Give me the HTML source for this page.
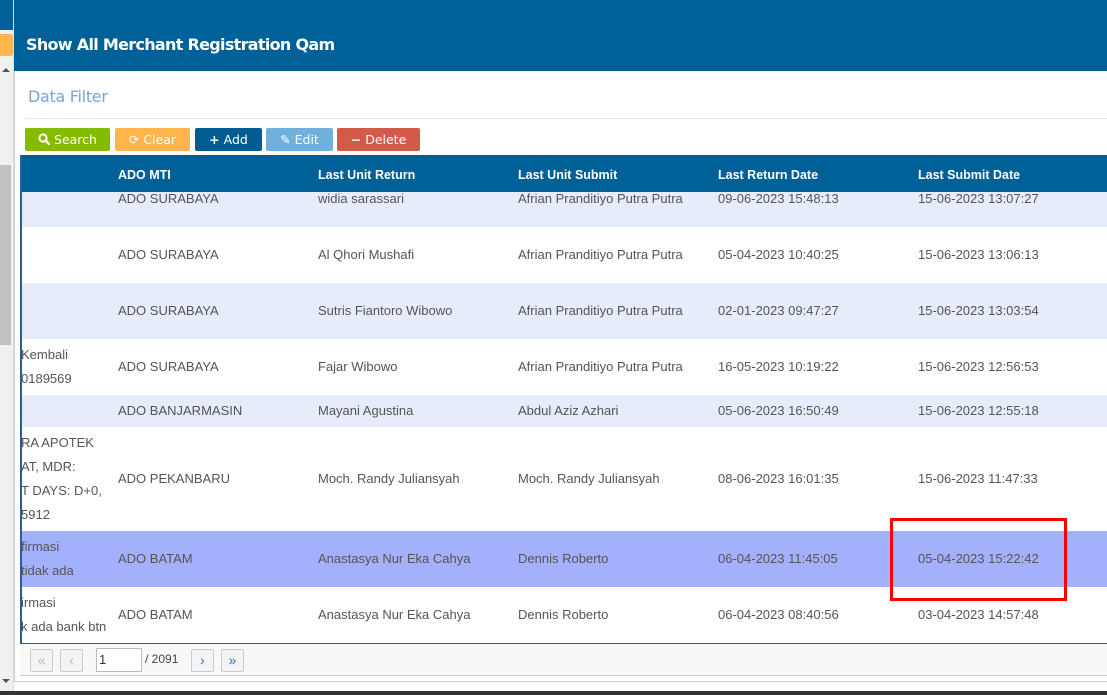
<!DOCTYPE html>
<html><head><meta charset="utf-8"><style>
*{margin:0;padding:0;box-sizing:border-box}
body{width:1107px;height:695px;overflow:hidden;background:#fff;font-family:"Liberation Sans",Arial,sans-serif;position:relative}
.a{position:absolute}
.btn{position:absolute;top:128px;height:23px;color:#fff;line-height:23px;border-radius:2px;text-align:center;font-family:"DejaVu Sans","Liberation Sans",sans-serif;font-size:12.5px}
.row{position:absolute;left:20px;right:0}
.c{position:absolute;font-size:13px;color:#555;white-space:nowrap}
.th{position:absolute;top:168px;font-size:12.5px;font-weight:bold;color:#fff}
.pb{position:absolute;top:649px;width:23px;height:23px;border:1px solid #ccc;border-radius:2px;background:#f4f4f4;font-size:14px;text-align:center;line-height:20px}
</style></head><body>
<div class="a" style="left:0;top:0;width:13px;height:695px;background:#f0f0f0"></div>
<div class="a" style="left:0;top:0;width:13px;height:30px;background:#006098"></div>
<div class="a" style="left:0;top:34px;width:13px;height:22px;background:#ffb44c;border-radius:0 3px 3px 0"></div>
<div class="a" style="left:0;top:165px;width:11px;height:180px;background:#c1c1c1"></div>
<div class="a" style="left:2px;top:68px;width:0;height:0;border-left:4px solid transparent;border-right:4px solid transparent;border-bottom:4px solid #555"></div>
<div class="a" style="left:2px;top:679px;width:0;height:0;border-left:4px solid transparent;border-right:4px solid transparent;border-top:4px solid #555"></div>
<div class="a" style="left:13px;top:0;width:1px;height:695px;background:#ddd"></div>
<div class="a" style="left:14px;top:0;width:1093px;height:71px;background:#006098"></div>
<div class="a" style="left:26px;top:35px;color:#fff;font-size:16px;font-weight:bold;font-family:'DejaVu Sans',sans-serif;letter-spacing:-0.7px">Show All Merchant Registration Qam</div>
<div class="a" style="left:28px;top:87px;color:#7aa6cc;font-size:16px;font-family:'DejaVu Sans',sans-serif;letter-spacing:-0.3px">Data Filter</div>
<div class="a" style="left:25px;top:118px;width:1082px;height:1px;background:#dbe8f3"></div>
<div class="btn" style="left:25px;width:85px;background:#86bc00"><svg width="12" height="12" viewBox="0 0 12 12" style="vertical-align:-1px"><circle cx="5" cy="5" r="3.6" fill="none" stroke="#fff" stroke-width="2"/><path d="M7.5 7.5L11 11" stroke="#fff" stroke-width="2.4" stroke-linecap="round"/></svg> Search</div>
<div class="btn" style="left:115px;width:75px;background:#ffb44c">⟳ Clear</div>
<div class="btn" style="left:195px;width:67px;background:#005d91"><b>+</b> Add</div>
<div class="btn" style="left:266px;width:67px;background:#6fb0dd">✎ Edit</div>
<div class="btn" style="left:337px;width:83px;background:#d35a48"><b>−</b> Delete</div>

<div class="a" style="left:20px;top:155px;width:1087px;height:37px;background:#006098"></div>
<div class="th" style="left:118px">ADO MTI</div>
<div class="th" style="left:318px">Last Unit Return</div>
<div class="th" style="left:518px">Last Unit Submit</div>
<div class="th" style="left:718px">Last Return Date</div>
<div class="th" style="left:918px">Last Submit Date</div>

<div class="row" style="top:192px;height:35px;background:#e6ecf9"></div>
<div class="row" style="top:283px;height:56px;background:#e6ecf9"></div>
<div class="row" style="top:395px;height:32px;background:#e6ecf9"></div>
<div class="row" style="top:531px;height:56px;background:#a3b0fb"></div>
<div class="a" style="left:20px;top:155px;width:2px;height:489px;background:#2a5f95"></div>
<div class="a" style="left:20px;top:643px;width:1087px;height:1px;background:#2a5f95"></div>

<div class="c" style="top:191px;left:118px">ADO SURABAYA</div><div class="c" style="top:191px;left:318px">widia sarassari</div><div class="c" style="top:191px;left:518px">Afrian Pranditiyo Putra Putra</div><div class="c" style="top:191px;left:718px">09-06-2023 15:48:13</div><div class="c" style="top:191px;left:918px">15-06-2023 13:07:27</div>
<div class="c" style="top:247px;left:118px">ADO SURABAYA</div><div class="c" style="top:247px;left:318px">Al Qhori Mushafi</div><div class="c" style="top:247px;left:518px">Afrian Pranditiyo Putra Putra</div><div class="c" style="top:247px;left:718px">05-04-2023 10:40:25</div><div class="c" style="top:247px;left:918px">15-06-2023 13:06:13</div>
<div class="c" style="top:303px;left:118px">ADO SURABAYA</div><div class="c" style="top:303px;left:318px">Sutris Fiantoro Wibowo</div><div class="c" style="top:303px;left:518px">Afrian Pranditiyo Putra Putra</div><div class="c" style="top:303px;left:718px">02-01-2023 09:47:27</div><div class="c" style="top:303px;left:918px">15-06-2023 13:03:54</div>
<div class="c" style="top:347px;left:21px">Kembali</div><div class="c" style="top:371px;left:21px">0189569</div>
<div class="c" style="top:359px;left:118px">ADO SURABAYA</div><div class="c" style="top:359px;left:318px">Fajar Wibowo</div><div class="c" style="top:359px;left:518px">Afrian Pranditiyo Putra Putra</div><div class="c" style="top:359px;left:718px">16-05-2023 10:19:22</div><div class="c" style="top:359px;left:918px">15-06-2023 12:56:53</div>
<div class="c" style="top:403px;left:118px">ADO BANJARMASIN</div><div class="c" style="top:403px;left:318px">Mayani Agustina</div><div class="c" style="top:403px;left:518px">Abdul Aziz Azhari</div><div class="c" style="top:403px;left:718px">05-06-2023 16:50:49</div><div class="c" style="top:403px;left:918px">15-06-2023 12:55:18</div>
<div class="c" style="top:435px;left:21px">RA APOTEK</div><div class="c" style="top:459px;left:21px">AT, MDR:</div><div class="c" style="top:483px;left:21px">T DAYS: D+0,</div><div class="c" style="top:507px;left:21px">5912</div>
<div class="c" style="top:471px;left:118px">ADO PEKANBARU</div><div class="c" style="top:471px;left:318px">Moch. Randy Juliansyah</div><div class="c" style="top:471px;left:518px">Moch. Randy Juliansyah</div><div class="c" style="top:471px;left:718px">08-06-2023 16:01:35</div><div class="c" style="top:471px;left:918px">15-06-2023 11:47:33</div>
<div class="c" style="top:539px;left:21px">firmasi</div><div class="c" style="top:563px;left:21px">tidak ada</div>
<div class="c" style="top:551px;left:118px">ADO BATAM</div><div class="c" style="top:551px;left:318px">Anastasya Nur Eka Cahya</div><div class="c" style="top:551px;left:518px">Dennis Roberto</div><div class="c" style="top:551px;left:718px">06-04-2023 11:45:05</div><div class="c" style="top:551px;left:918px">05-04-2023 15:22:42</div>
<div class="c" style="top:595px;left:21px">irmasi</div><div class="c" style="top:619px;left:21px">k ada bank btn</div>
<div class="c" style="top:607px;left:118px">ADO BATAM</div><div class="c" style="top:607px;left:318px">Anastasya Nur Eka Cahya</div><div class="c" style="top:607px;left:518px">Dennis Roberto</div><div class="c" style="top:607px;left:718px">06-04-2023 08:40:56</div><div class="c" style="top:607px;left:918px">03-04-2023 14:57:48</div>

<div class="a" style="left:890px;top:518px;width:177px;height:83px;border:3px solid #f00"></div>

<div class="a" style="left:20px;top:644px;width:1087px;height:31px;background:#f8f8f8"></div>
<div class="a" style="left:20px;top:675px;width:1087px;height:1px;background:#ccc"></div>
<div class="a" style="left:14px;top:681px;width:1093px;height:1px;background:#ccc"></div>
<div class="a" style="left:14px;top:71px;width:1px;height:611px;background:#ccc"></div>
<div class="pb" style="left:30px;color:#bbb">«</div>
<div class="pb" style="left:60px;color:#bbb">‹</div>
<div class="a" style="left:96px;top:648px;width:46px;height:24px;border:1px solid #bbb;background:#fff;font-size:13px;color:#333;padding:3px 2px">1</div>
<div class="a" style="left:145px;top:652px;font-size:12px;color:#444">/ 2091</div>
<div class="pb" style="left:191px;color:#2a70b8">›</div>
<div class="pb" style="left:221px;color:#2a70b8">»</div>
<div class="a" style="left:0;top:691px;width:1107px;height:4px;background:#333"></div>
</body></html>
